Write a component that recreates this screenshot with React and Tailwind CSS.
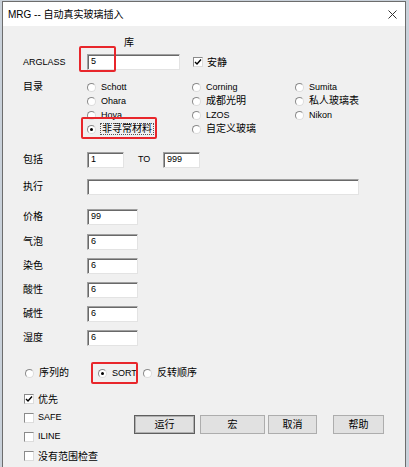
const FONT = "font-[family-name:'Liberation_Sans','Noto_Sans_CJK_SC',sans-serif]";

function Edit({ w, v = "" }) {
	return (
		<div
			className={`h-[16px] ${w} bg-white border border-t-[#a0a0a0] border-l-[#a0a0a0] border-r-[#e3e3e3] border-b-[#e3e3e3] shadow-[inset_1px_1px_0_#696969] flex items-center pl-[3px] text-[9px] text-black`}
		>
			{v}
		</div>
	);
}

function Radio({ on }) {
	return (
		<span className="w-[9px] h-[9px] shrink-0 rounded-full bg-white border border-t-[#8a8a8a] border-l-[#8a8a8a] border-r-[#dcdcdc] border-b-[#dcdcdc] flex items-center justify-center">
			{on && <span className="w-[3px] h-[3px] rounded-full bg-black" />}
		</span>
	);
}

function Check({ on }) {
	return (
		<span className="w-[10px] h-[10px] shrink-0 bg-white border border-t-[#8a8a8a] border-l-[#8a8a8a] border-r-[#dcdcdc] border-b-[#dcdcdc] flex items-center justify-center">
			{on && (
				<svg width="8" height="8" viewBox="0 0 8 8">
					<path d="M1 4 L3 6 L7 1.5" fill="none" stroke="#000" strokeWidth="1.4" />
				</svg>
			)}
		</span>
	);
}

function Opt({ label, on, cjk, col, focus }) {
	return (
		<div className={`flex items-center h-[14px] ${col}`}>
			<Radio on={on} />
			<span
				className={`${focus ? "ml-[4px] px-[1px] border border-dotted border-[#555]" : "ml-[5px]"} ${
					cjk ? "text-[10px]" : "text-[9px]"
				} leading-none`}
			>
				{label}
			</span>
		</div>
	);
}

function Row({ label, children, mt }) {
	return (
		<div className={`flex items-center ${mt}`}>
			<span className="w-[64px] text-[10px] leading-none">{label}</span>
			{children}
		</div>
	);
}

function Btn({ label, w, def }) {
	return (
		<div
			className={`h-[19px] ${w} bg-[#e1e1e1] border ${
				def ? "border-[#5f5f5f] shadow-[inset_0_0_0_1px_#b0b0b0]" : "border-[#adadad]"
			} flex items-center justify-center text-[10px]`}
		>
			{label}
		</div>
	);
}

export default function App() {
	return (
		<div className={`w-[409px] h-[467px] bg-[#c9d1da] pt-[1px] pl-[2px] overflow-hidden ${FONT} text-black`}>
			<div className="w-[404px] h-[470px] border border-[#6d6d6d] bg-[#f0f0f0] flex flex-col">
				<div className="h-[24px] bg-white flex items-center justify-between pl-[5px] pr-[8px]">
					<span className="text-[10px]">MRG -- 自动真实玻璃插入</span>
					<svg width="9" height="9" viewBox="0 0 9 9">
						<path d="M0.5 0.5 L8.5 8.5 M8.5 0.5 L0.5 8.5" stroke="#333" strokeWidth="1" />
					</svg>
				</div>

				<div className="pl-[20px] flex flex-col">
					<div className="h-[12px] mt-[12px] pl-[101px] text-[10px] leading-none">库</div>

					<Row label={<span className="text-[9px]">ARGLASS</span>} mt="mt-[4px]">
						<div className="relative">
							<Edit w="w-[93px]" v="5" />
							<div className="absolute left-[-8px] top-[-8px] w-[37px] h-[26px] border-2 border-[#e8262b] rounded-[2px]" />
						</div>
						<div className="flex items-center ml-[13px]">
							<Check on />
							<span className="ml-[4px] text-[10px]">安静</span>
						</div>
					</Row>

					<div className="flex mt-[10px]">
						<span className="w-[64px] text-[10px] leading-[14px]">目录</span>
						<div className="grid grid-cols-[105px_103px_1fr]">
							<Opt label="Schott" />
							<Opt label="Corning" />
							<Opt label="Sumita" />
							<Opt label="Ohara" />
							<Opt label="成都光明" cjk />
							<Opt label="私人玻璃表" cjk />
							<Opt label="Hoya" />
							<Opt label="LZOS" />
							<Opt label="Nikon" />
							<div className="relative">
								<Opt label="非寻常材料" on cjk focus />
								<div className="absolute left-[-6px] top-[-5px] w-[76px] h-[22px] border-2 border-[#e8262b] rounded-[2px]" />
							</div>
							<Opt label="自定义玻璃" cjk />
						</div>
					</div>

					<Row label="包括" mt="mt-[16px]">
						<Edit w="w-[37px]" v="1" />
						<span className="ml-[14px] w-[25px] text-[9px]">TO</span>
						<Edit w="w-[37px]" v="999" />
					</Row>

					<Row label="执行" mt="mt-[11px]">
						<Edit w="w-[272px]" />
					</Row>

					<Row label="价格" mt="mt-[14px]">
						<Edit w="w-[51px]" v="99" />
					</Row>
					<Row label="气泡" mt="mt-[9px]">
						<Edit w="w-[51px]" v="6" />
					</Row>
					<Row label="染色" mt="mt-[8px]">
						<Edit w="w-[51px]" v="6" />
					</Row>
					<Row label="酸性" mt="mt-[8px]">
						<Edit w="w-[51px]" v="6" />
					</Row>
					<Row label="碱性" mt="mt-[8px]">
						<Edit w="w-[51px]" v="6" />
					</Row>
					<Row label="湿度" mt="mt-[8px]">
						<Edit w="w-[51px]" v="6" />
					</Row>

					<div className="flex items-center mt-[20px] pl-[2px]">
						<Opt label="序列的" cjk col="w-[73px]" />
						<div className="relative w-[45px]">
							<Opt label="SORT" on />
							<div className="absolute left-[-7px] top-[-4px] w-[47px] h-[22px] border-2 border-[#e8262b] rounded-[2px]" />
						</div>
						<Opt label="反转顺序" cjk />
					</div>

					<div className="flex mt-[12px] pl-[1px]">
						<div className="w-[110px] flex flex-col gap-[5px]">
							<div className="flex items-center h-[14px]">
								<Check on />
								<span className="ml-[4px] text-[10px]">优先</span>
							</div>
							<div className="flex items-center h-[14px]">
								<Check />
								<span className="ml-[4px] text-[9px]">SAFE</span>
							</div>
							<div className="flex items-center h-[14px]">
								<Check />
								<span className="ml-[4px] text-[9px]">ILINE</span>
							</div>
							<div className="flex items-center h-[14px]">
								<Check />
								<span className="ml-[4px] text-[10px]">没有范围检查</span>
							</div>
						</div>
						<div className="flex mt-[23px]">
							<Btn label="运行" w="w-[61px]" def />
							<div className="ml-[5px]"><Btn label="宏" w="w-[65px]" /></div>
							<div className="ml-[3px]"><Btn label="取消" w="w-[49px]" /></div>
							<div className="ml-[16px]"><Btn label="帮助" w="w-[51px]" /></div>
						</div>
					</div>
				</div>
			</div>
		</div>
	);
}
